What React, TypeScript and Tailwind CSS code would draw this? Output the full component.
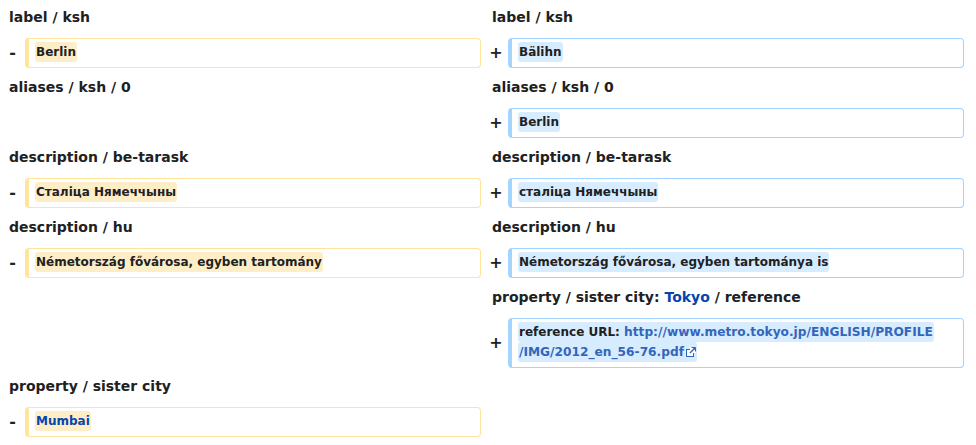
import React from "react";

const FONT = { fontFamily: '"DejaVu Sans", "Noto Sans", sans-serif' };

function Heading({ children, right }: { children?: React.ReactNode; right?: boolean }) {
  return (
    <div
      className={`col-span-2 pt-[7px] pb-[11px] text-[14px] leading-[20px] font-bold text-[#202122] whitespace-nowrap ${
        right ? "pl-[11px]" : "pl-[9px]"
      }`}
    >
      {children}
    </div>
  );
}

function Marker({ sign, right }: { sign?: string; right?: boolean }) {
  return (
    <div
      className={`flex items-center justify-center pb-[2px] text-[16px] font-bold text-[#202122] ${
        right ? "pl-[3px]" : ""
      }`}
    >
      {sign}
    </div>
  );
}

function Box({
  kind,
  tight,
  children,
}: {
  kind?: "del" | "add";
  tight?: boolean;
  children?: React.ReactNode;
}) {
  if (!kind) return <div className="pb-[2px]" />;
  const border =
    kind === "del"
      ? "border-[#ffe49c]"
      : "border-[#a3d3ff]";
  return (
    <div className={tight ? "pb-[1px]" : "pb-[2px]"}>
      <div
        className={`border border-l-4 ${border} rounded-[4px] bg-white pl-[6px] pr-2 pt-[3px] pb-[5px] text-[12px] leading-[20px] font-bold text-[#202122]`}
      >
        {children}
      </div>
    </div>
  );
}

function Hl({ kind, children }: { kind: "del" | "add"; children: React.ReactNode }) {
  return (
    <span
      className={`inline-block rounded-[3px] px-[1px] ${
        kind === "del" ? "bg-[#feeec8]" : "bg-[#d8ecff]"
      }`}
    >
      {children}
    </span>
  );
}

function ExtIcon() {
  return (
    <svg width="10" height="10" viewBox="0 0 10 10" className="inline-block ml-[2px] align-[-1px]">
      <rect x="0.5" y="2.5" width="7" height="7" fill="#fff" stroke="#36b" strokeWidth="1" />
      <rect x="4" y="0" width="6" height="6" fill="#fff" />
      <path d="M5.5 0.5 H9.5 V4.5" fill="none" stroke="#36b" strokeWidth="1" />
      <path d="M9.2 0.8 L4 6" stroke="#36b" strokeWidth="1.4" />
      <path d="M6.5 0.5 L9.5 0.5 L9.5 3.5 Z" fill="#36b" />
    </svg>
  );
}

export default function App() {
  return (
    <div className="w-[976px] h-[445px] bg-white overflow-hidden" style={FONT}>
      <div className="grid grid-cols-[25px_456px_27px_456px]">
        {/* label / ksh */}
        <Heading>label / ksh</Heading>
        <Heading right>label / ksh</Heading>
        <Marker sign="-" />
        <Box kind="del">
          <Hl kind="del">Berlin</Hl>
        </Box>
        <Marker sign="+" right />
        <Box kind="add">
          <Hl kind="add">Bälihn</Hl>
        </Box>

        {/* aliases */}
        <Heading>aliases / ksh / 0</Heading>
        <Heading right>aliases / ksh / 0</Heading>
        <Marker />
        <Box />
        <Marker sign="+" right />
        <Box kind="add">
          <Hl kind="add">Berlin</Hl>
        </Box>

        {/* description / be-tarask */}
        <Heading>description / be-tarask</Heading>
        <Heading right>description / be-tarask</Heading>
        <Marker sign="-" />
        <Box kind="del">
          <Hl kind="del">Сталіца Нямеччыны</Hl>
        </Box>
        <Marker sign="+" right />
        <Box kind="add">
          <Hl kind="add">сталіца Нямеччыны</Hl>
        </Box>

        {/* description / hu */}
        <Heading>description / hu</Heading>
        <Heading right>description / hu</Heading>
        <Marker sign="-" />
        <Box kind="del">
          <Hl kind="del">Németország fővárosa, egyben tartomány</Hl>
        </Box>
        <Marker sign="+" right />
        <Box kind="add">
          <Hl kind="add">Németország fővárosa, egyben tartománya is</Hl>
        </Box>

        {/* reference */}
        <Heading></Heading>
        <Heading right>
          property / sister city: <span className="text-[#0645ad]">Tokyo</span> / reference
        </Heading>
        <Marker />
        <Box />
        <Marker sign="+" right />
        <Box kind="add" tight>
          <Hl kind="add">
            reference URL: <span className="text-[#36b] text-[12.2px]">http://www.metro.tokyo.jp/ENGLISH/PROFILE</span>
          </Hl>
          <br />
          <Hl kind="add">
            <span className="text-[#36b] text-[12.2px]">/IMG/2012_en_56-76.pdf</span>
            <ExtIcon />
          </Hl>
        </Box>

        {/* sister city */}
        <Heading>property / sister city</Heading>
        <Heading right></Heading>
        <Marker sign="-" />
        <Box kind="del">
          <Hl kind="del">
            <span className="text-[#0645ad]">Mumbai</span>
          </Hl>
        </Box>
        <Marker />
        <Box />
      </div>
    </div>
  );
}
